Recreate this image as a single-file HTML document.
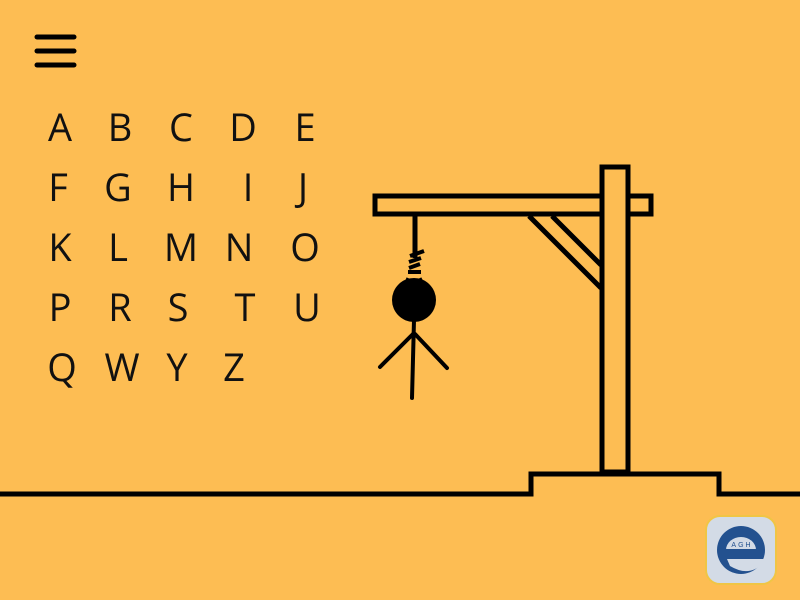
<!DOCTYPE html>
<html><head><meta charset="utf-8"><style>
body{margin:0;width:800px;height:600px;background:#fdbd53;overflow:hidden;position:relative;font-family:"Open Sans","Liberation Sans",sans-serif}
.l{position:absolute;font-size:38px;color:#111;width:60px;text-align:center;line-height:1}
</style></head><body>
<svg width="800" height="600" style="position:absolute;left:0;top:0">
<g stroke="#000" stroke-width="5" stroke-linecap="round" fill="none">
<line x1="37" y1="37" x2="74" y2="37"/><line x1="37" y1="51" x2="74" y2="51"/><line x1="37" y1="65" x2="74" y2="65"/>
</g>
<g stroke="#000" stroke-width="5" fill="none">
<rect x="375" y="196" width="276" height="18"/>
<rect x="602" y="167" width="26" height="305" fill="#fdbd53"/>
<line x1="529" y1="216" x2="601" y2="288"/>
<line x1="552" y1="216" x2="601" y2="265"/>
<polyline points="0,494 531,494 531,474 719,474 719,494 800,494"/>
<line x1="415" y1="214" x2="415" y2="258"/>
<line x1="412" y1="398" x2="414" y2="320" stroke-width="4" stroke-linecap="round"/>
<line x1="380" y1="367" x2="413" y2="334" stroke-width="4" stroke-linecap="round"/>
<line x1="447" y1="368" x2="415" y2="334" stroke-width="4" stroke-linecap="round"/>
</g>
<path d="M410,256 L424,251 M409,262 L421,258 M409,268 L420,264 M408,272 L421,272" stroke="#000" stroke-width="4"/>
<circle cx="414" cy="300" r="22" fill="#000"/>
<path d="M408,278 L402,292 M420,278 L427,292" stroke="#000" stroke-width="3"/>
<rect x="706" y="516" width="70" height="68" rx="14" fill="#d3dbe6" stroke="#f0c545" stroke-width="2"/>
<circle cx="741" cy="550" r="24" fill="#23518f"/>
<path d="M726,550 A15,13 0 0 1 756,550 Z" fill="#d3dbe6"/>
<rect x="726" y="549" width="36" height="6" fill="#23518f"/>
<path d="M727,559 L764,559 L764,562 Q750,578 730,566 Z" fill="#d3dbe6"/>
<text x="742" y="547" font-size="7" text-anchor="middle" fill="#23518f" font-family="Liberation Sans" letter-spacing="2">AGH</text>
</svg>
<div class="l" style="left:30px;top:108px">A</div><div class="l" style="left:90px;top:108px">B</div><div class="l" style="left:151px;top:108px">C</div><div class="l" style="left:213px;top:108px">D</div><div class="l" style="left:275px;top:108px">E</div>
<div class="l" style="left:28px;top:168px">F</div><div class="l" style="left:88px;top:168px">G</div><div class="l" style="left:151px;top:168px">H</div><div class="l" style="left:218px;top:168px">I</div><div class="l" style="left:273px;top:168px">J</div>
<div class="l" style="left:30px;top:228px">K</div><div class="l" style="left:88px;top:228px">L</div><div class="l" style="left:151px;top:228px">M</div><div class="l" style="left:209px;top:228px">N</div><div class="l" style="left:275px;top:228px">O</div>
<div class="l" style="left:30px;top:288px">P</div><div class="l" style="left:90px;top:288px">R</div><div class="l" style="left:148px;top:288px">S</div><div class="l" style="left:215px;top:288px">T</div><div class="l" style="left:277px;top:288px">U</div>
<div class="l" style="left:32px;top:348px">Q</div><div class="l" style="left:92px;top:348px">W</div><div class="l" style="left:147px;top:348px">Y</div><div class="l" style="left:204px;top:348px">Z</div>
</body></html>
